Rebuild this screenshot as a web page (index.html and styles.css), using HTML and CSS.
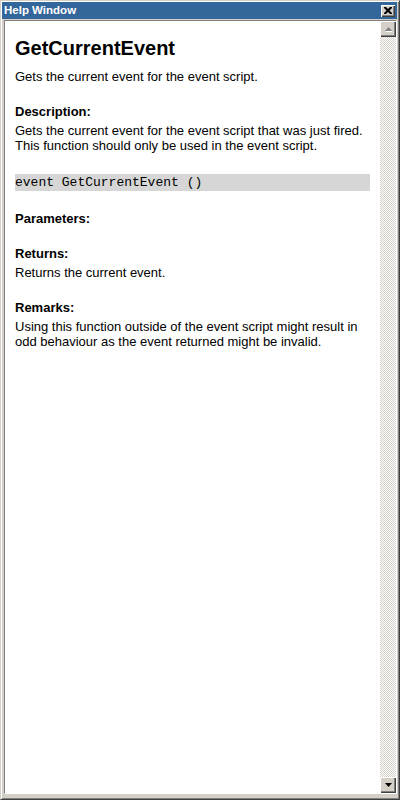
FILE: index.html
```html
<!DOCTYPE html>
<html>
<head>
<meta charset="utf-8">
<title>Help Window</title>
<link rel="stylesheet" href="styles.css">
</head>
<body>
<div class="window">
  <div class="titlebar">
    <span class="title">Help Window</span>
    <span class="close">
      <svg width="8" height="7" viewBox="0 0 8 7"><path d="M0 0h2l2 2 2-2h2v1l-2.5 2.5L8 6v1H6L4 5 2 7H0V6l2.5-2.5L0 1z" fill="#000"/></svg>
    </span>
  </div>
  <div class="frame">
    <div class="content">
      <h1 class="fn-title">GetCurrentEvent</h1>
      <p class="text">Gets the current event for the event script.</p>
      <h3 class="section">Description:</h3>
      <p class="text">Gets the current event for the event script that was just fired. This function should only be used in the event script.</p>
      <pre class="code">event GetCurrentEvent ()</pre>
      <h3 class="section">Parameters:</h3>
      <h3 class="section">Returns:</h3>
      <p class="text">Returns the current event.</p>
      <h3 class="section">Remarks:</h3>
      <p class="text">Using this function outside of the event script might result in odd behaviour as the event returned might be invalid.</p>
    </div>
    <div class="scrollbar">
      <div class="sb-btn">
        <svg width="7" height="5" viewBox="0 0 7 5"><path d="M3.5 0L7 4H0z" fill="#808080"/><path d="M1 4h6v1H1z" fill="#fff"/></svg>
      </div>
      <div class="sb-track"></div>
      <div class="sb-btn sb-down">
        <svg width="7" height="4" viewBox="0 0 7 4"><path d="M0 0h7L3.5 4z" fill="#000"/></svg>
      </div>
    </div>
  </div>
</div>
</body>
</html>
```
FILE: styles.css
```css
html, body {
  margin: 0;
  padding: 0;
  background: #d4d0c8;
}

.window {
  width: 400px;
  height: 800px;
  box-sizing: border-box;
  border: 1px solid;
  border-color: #d4d0c8 #404040 #404040 #d4d0c8;
  box-shadow: inset 1px 1px #fff, inset -1px -1px #808080;
  padding: 1px 2px 5px 1px;
  display: flex;
  flex-direction: column;
  background: #d4d0c8;
}

.titlebar {
  height: 17px;
  margin-bottom: 1px;
  background: #33669a;
  display: flex;
  align-items: center;
  justify-content: space-between;
  padding: 0 2px 0 2px;
}

.title {
  color: #fff;
  font-family: "Liberation Sans", Arial, sans-serif;
  font-weight: bold;
  font-size: 11.5px;
  line-height: 17px;
}

.close {
  width: 14px;
  height: 12px;
  box-sizing: border-box;
  background: #d4d0c8;
  box-shadow: inset 1px 1px #fff, inset -1px -1px #404040, inset -2px -2px #808080;
  display: flex;
  align-items: center;
  justify-content: center;
}

.frame {
  flex: 1;
  min-height: 0;
  margin-left: 2px;
  border-top: 1px solid #808080;
  border-left: 1px solid #808080;
  border-right: 1px solid #fff;
  border-bottom: 1px solid #fff;
  display: flex;
}

.content {
  flex: 1;
  background: #fff;
  padding: 16px 10px 0 10px;
  overflow: hidden;
  font-family: "Liberation Sans", Arial, sans-serif;
  font-size: 13px;
  line-height: 15px;
  color: #000;
}

.fn-title {
  margin: 0 0 9px;
  font-size: 20px;
  line-height: 23px;
  font-weight: bold;
}

.text {
  margin: 0;
}

.section {
  margin: 20px 0 4px;
  font-size: 13px;
  line-height: 15px;
  font-weight: bold;
}

.code {
  margin: 21px 0 0;
  height: 17px;
  line-height: 17px;
  background: #d6d6d6;
  font-family: "Liberation Mono", "Courier New", monospace;
  font-size: 13px;
}

.scrollbar {
  width: 16px;
  display: flex;
  flex-direction: column;
}

.sb-btn {
  height: 16px;
  box-sizing: border-box;
  background: #d4d0c8;
  box-shadow: inset 1px 1px #fff, inset -1px -1px #404040, inset -2px -2px #808080;
  display: flex;
  align-items: center;
  justify-content: center;
}

.sb-track {
  flex: 1;
  background-color: #fff;
  background-image: conic-gradient(#d4d0c8 25%, #fff 0 50%, #d4d0c8 0 75%, #fff 0);
  background-size: 2px 2px;
}
```
